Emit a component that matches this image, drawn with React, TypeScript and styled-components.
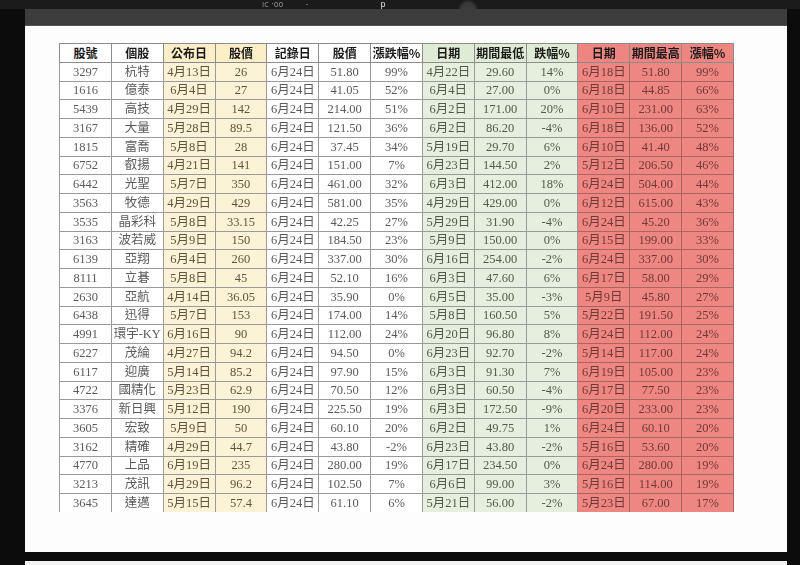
import React from "react";
import styled, { createGlobalStyle } from "styled-components";

const Global = createGlobalStyle`
  html, body { margin: 0; padding: 0; background: #0c0c0c; }
  body { width: 800px; height: 565px; overflow: hidden; }
  #root { width: 800px; height: 565px; }
`;

type Tone = "w" | "y" | "g" | "r";

const tones: Tone[] = ["w", "w", "y", "y", "w", "w", "w", "g", "g", "g", "r", "r", "r"];

const headers = ["股號", "個股", "公布日", "股價", "記錄日", "股價", "漲跌幅%", "日期", "期間最低", "跌幅%", "日期", "期間最高", "漲幅%"];

const rows: string[][] = [
  ["3297", "杭特", "4月13日", "26", "6月24日", "51.80", "99%", "4月22日", "29.60", "14%", "6月18日", "51.80", "99%"],
  ["1616", "億泰", "6月4日", "27", "6月24日", "41.05", "52%", "6月4日", "27.00", "0%", "6月18日", "44.85", "66%"],
  ["5439", "高技", "4月29日", "142", "6月24日", "214.00", "51%", "6月2日", "171.00", "20%", "6月10日", "231.00", "63%"],
  ["3167", "大量", "5月28日", "89.5", "6月24日", "121.50", "36%", "6月2日", "86.20", "-4%", "6月18日", "136.00", "52%"],
  ["1815", "富喬", "5月8日", "28", "6月24日", "37.45", "34%", "5月19日", "29.70", "6%", "6月10日", "41.40", "48%"],
  ["6752", "叡揚", "4月21日", "141", "6月24日", "151.00", "7%", "6月23日", "144.50", "2%", "5月12日", "206.50", "46%"],
  ["6442", "光聖", "5月7日", "350", "6月24日", "461.00", "32%", "6月3日", "412.00", "18%", "6月24日", "504.00", "44%"],
  ["3563", "牧德", "4月29日", "429", "6月24日", "581.00", "35%", "4月29日", "429.00", "0%", "6月12日", "615.00", "43%"],
  ["3535", "晶彩科", "5月8日", "33.15", "6月24日", "42.25", "27%", "5月29日", "31.90", "-4%", "6月24日", "45.20", "36%"],
  ["3163", "波若威", "5月9日", "150", "6月24日", "184.50", "23%", "5月9日", "150.00", "0%", "6月15日", "199.00", "33%"],
  ["6139", "亞翔", "6月4日", "260", "6月24日", "337.00", "30%", "6月16日", "254.00", "-2%", "6月24日", "337.00", "30%"],
  ["8111", "立碁", "5月8日", "45", "6月24日", "52.10", "16%", "6月3日", "47.60", "6%", "6月17日", "58.00", "29%"],
  ["2630", "亞航", "4月14日", "36.05", "6月24日", "35.90", "0%", "6月5日", "35.00", "-3%", "5月9日", "45.80", "27%"],
  ["6438", "迅得", "5月7日", "153", "6月24日", "174.00", "14%", "5月8日", "160.50", "5%", "5月22日", "191.50", "25%"],
  ["4991", "環宇-KY", "6月16日", "90", "6月24日", "112.00", "24%", "6月20日", "96.80", "8%", "6月24日", "112.00", "24%"],
  ["6227", "茂綸", "4月27日", "94.2", "6月24日", "94.50", "0%", "6月23日", "92.70", "-2%", "5月14日", "117.00", "24%"],
  ["6117", "迎廣", "5月14日", "85.2", "6月24日", "97.90", "15%", "6月3日", "91.30", "7%", "6月19日", "105.00", "23%"],
  ["4722", "國精化", "5月23日", "62.9", "6月24日", "70.50", "12%", "6月3日", "60.50", "-4%", "6月17日", "77.50", "23%"],
  ["3376", "新日興", "5月12日", "190", "6月24日", "225.50", "19%", "6月3日", "172.50", "-9%", "6月20日", "233.00", "23%"],
  ["3605", "宏致", "5月9日", "50", "6月24日", "60.10", "20%", "6月2日", "49.75", "1%", "6月24日", "60.10", "20%"],
  ["3162", "精確", "4月29日", "44.7", "6月24日", "43.80", "-2%", "6月23日", "43.80", "-2%", "5月16日", "53.60", "20%"],
  ["4770", "上品", "6月19日", "235", "6月24日", "280.00", "19%", "6月17日", "234.50", "0%", "6月24日", "280.00", "19%"],
  ["3213", "茂訊", "4月29日", "96.2", "6月24日", "102.50", "7%", "6月6日", "99.00", "3%", "5月16日", "114.00", "19%"],
  ["3645", "達邁", "5月15日", "57.4", "6月24日", "61.10", "6%", "5月21日", "56.00", "-2%", "5月23日", "67.00", "17%"],
];

const cellBg: Record<Tone, string> = {
  w: "#ffffff",
  y: "#fcf3d6",
  g: "#e6eedd",
  r: "#ee8782",
};

const headBg: Record<Tone, string> = {
  w: "#ffffff",
  y: "#fcefc8",
  g: "#e0ebd5",
  r: "#ee8580",
};

const textColor: Record<Tone, string> = {
  w: "#5a5a5a",
  y: "#5e5440",
  g: "#525a4e",
  r: "#6e3a38",
};

const Screen = styled.div`
  width: 800px;
  height: 565px;
  display: flex;
  flex-direction: column;
  background: #0c0c0c;
  overflow: hidden;
`;

const TopStrip = styled.div`
  height: 9px;
  flex: none;
  background: #1b1b1b;
  display: flex;
  align-items: center;
  padding-left: 262px;
  overflow: hidden;
`;

const TopText = styled.span<{ $gap: number; $color: string }>`
  margin-left: ${(p) => p.$gap}px;
  font-family: "DejaVu Sans", sans-serif;
  font-size: 8px;
  line-height: 9px;
  color: ${(p) => p.$color};
  filter: blur(0.6px);
  white-space: nowrap;
`;

const TopDot = styled.span`
  margin-left: 74px;
  width: 18px;
  height: 18px;
  border-radius: 50%;
  background: #3a3a3a;
  transform: translateY(5px);
  filter: blur(1px);
`;

const Sheet = styled.div`
  flex: 1;
  margin: 0 13px 0 25px;
  display: flex;
  flex-direction: column;
`;

const GrayBand = styled.div`
  height: 16px;
  flex: none;
  background: #3c3c3c;
  border-bottom: 1px solid #555;
`;

const Paper = styled.div`
  height: 526px;
  flex: none;
  background: #fdfdfd;
  padding: 17px 0 0 34px;
  box-sizing: border-box;
`;

const Gap = styled.div`
  height: 9px;
  flex: none;
  background: #0c0c0c;
`;

const BottomPaper = styled.div`
  flex: 1;
  background: #f4f4f4;
`;

const Table = styled.table`
  border-collapse: collapse;
  table-layout: fixed;
  width: 674px;
  font-family: "Liberation Serif", "Noto Sans CJK TC", serif;
  filter: blur(0.35px);
`;

const Col = styled.col`
  width: 51.85px;
`;

const HeadCell = styled.th<{ $tone: Tone }>`
  height: 18.75px;
  padding: 0;
  box-sizing: border-box;
  border: 1px solid #8c8c8c;
  background: ${(p) => headBg[p.$tone]};
  color: #1a1a1a;
  font-family: "Noto Sans CJK TC", sans-serif;
  font-weight: 700;
  font-size: 12px;
  line-height: 16px;
  text-align: center;
  white-space: nowrap;
  overflow: hidden;
`;

const Cell = styled.td<{ $tone: Tone; $last: boolean }>`
  height: 18.75px;
  padding: 0;
  box-sizing: border-box;
  border: 1px solid ${(p) => (p.$tone === "r" ? "#a86663" : "#9a9a9a")};
  border-bottom: ${(p) => (p.$last ? "none" : `1px solid ${p.$tone === "r" ? "#a86663" : "#9a9a9a"}`)};
  background: ${(p) => cellBg[p.$tone]};
  color: ${(p) => textColor[p.$tone]};
  font-size: 12.5px;
  line-height: 16px;
  text-align: center;
  white-space: nowrap;
  overflow: hidden;
`;

export default function App() {
  return (
    <>
      <Global />
      <Screen>
        <TopStrip>
          <TopText $gap={0} $color="#8a8a8a">ıc ·oo</TopText>
          <TopText $gap={22} $color="#777">-</TopText>
          <TopText $gap={72} $color="#e8e8e8">p</TopText>
          <TopDot />
        </TopStrip>
        <Sheet>
          <GrayBand />
          <Paper>
            <Table>
              <colgroup>
                {tones.map((_, i) => (
                  <Col key={i} />
                ))}
              </colgroup>
              <thead>
                <tr>
                  {headers.map((h, i) => (
                    <HeadCell key={i} $tone={tones[i]}>
                      {h}
                    </HeadCell>
                  ))}
                </tr>
              </thead>
              <tbody>
                {rows.map((r, ri) => (
                  <tr key={ri}>
                    {r.map((v, ci) => (
                      <Cell key={ci} $tone={tones[ci]} $last={ri === rows.length - 1}>
                        {v}
                      </Cell>
                    ))}
                  </tr>
                ))}
              </tbody>
            </Table>
          </Paper>
          <Gap />
          <BottomPaper />
        </Sheet>
      </Screen>
    </>
  );
}
